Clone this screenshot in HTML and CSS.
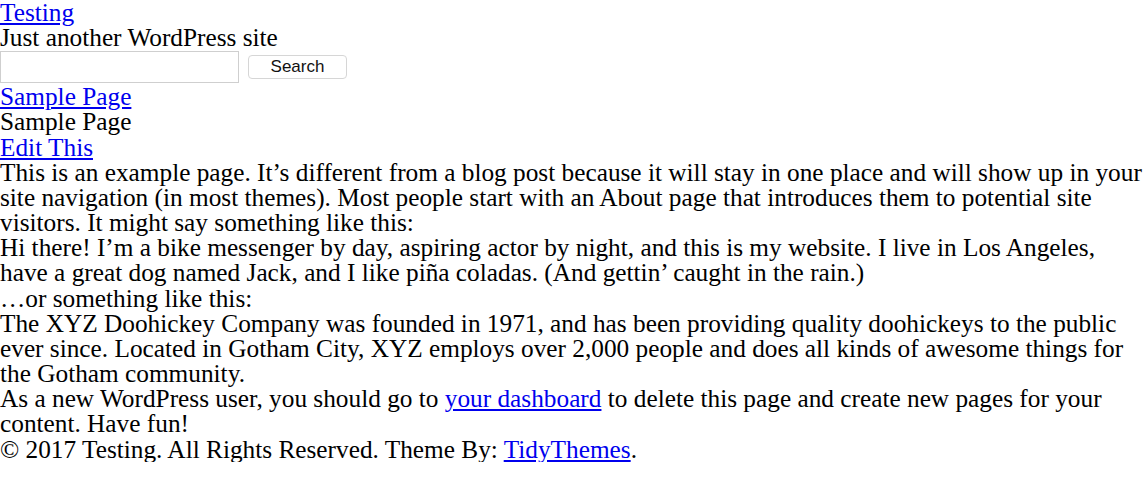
FILE: index.html
```html
<!DOCTYPE html>
<html lang="en">
<head>
    <meta charset="UTF-8">
    <title>Sample Page – Testing</title>
    <link rel="stylesheet" href="styles.css">
</head>
<body>
    <div class="site">
        <header class="siteHeader">
            <div class="siteTitle"><a href="#">Testing</a></div>
            <div class="siteDesc">Just another WordPress site</div>
            <form class="searchForm" action="">
                <input type="search" class="searchField">
                <button type="submit" class="searchBtn">Search</button>
            </form>
            <nav class="mainNav">
                <a href="#">Sample Page</a>
            </nav>
        </header>
        <main class="content">
            <div class="entryTitle">Sample Page</div>
            <div class="editLink"><a href="#">Edit This</a></div>
            <div class="entry">
                <p>This is an example page. It’s different from a blog post because it will stay in one place and will show up in your site navigation (in most themes). Most people start with an About page that introduces them to potential site visitors. It might say something like this:</p>
                <p>Hi there! I’m a bike messenger by day, aspiring actor by night, and this is my website. I live in Los Angeles, have a great dog named Jack, and I like piña coladas. (And gettin’ caught in the rain.)</p>
                <p>…or something like this:</p>
                <p>The XYZ Doohickey Company was founded in 1971, and has been providing quality doohickeys to the public ever since. Located in Gotham City, XYZ employs over 2,000 people and does all kinds of awesome things for the Gotham community.</p>
                <p>As a new WordPress user, you should go to <a href="#">your dashboard</a> to delete this page and create new pages for your content. Have fun!</p>
            </div>
        </main>
        <footer class="siteFooter">
            © 2017 Testing. All Rights Reserved. Theme By: <a href="#">TidyThemes</a>.
        </footer>
    </div>
</body>
</html>
```

FILE: styles.css
```css
* {
    margin: 0;
    padding: 0;
}

body {
    font-family: "Liberation Serif", "Times New Roman", serif;
    font-size: 25.3px;
    line-height: 25.15px;
    color: #000;
    background: #fff;
}

a {
    color: #0000ee;
}

.searchForm {
    display: flex;
    align-items: center;
    gap: 9px;
    height: 34px;
}

.searchField {
    width: 239px;
    height: 32px;
    box-sizing: border-box;
    border: 1px solid #cfcfcf;
    background: #fff;
}

.searchBtn {
    width: 99px;
    height: 24px;
    border: 1px solid #d6d6d6;
    border-radius: 4px;
    background: #fff;
    font-family: "Liberation Sans", Arial, sans-serif;
    font-size: 17px;
    color: #111;
}
```
